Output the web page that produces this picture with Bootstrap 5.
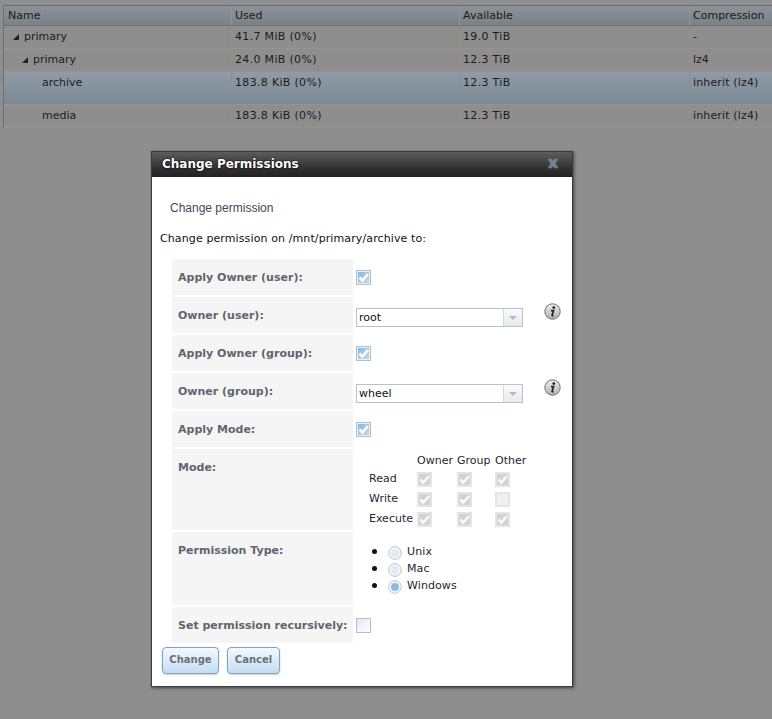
<!DOCTYPE html>
<html lang="en"><head><meta charset="utf-8"><title>Change Permissions</title>
<link href="https://cdn.jsdelivr.net/npm/bootstrap@5.3.0/dist/css/bootstrap.min.css" rel="stylesheet">
<style>
html,body{height:100%}
body{margin:0;background:#8e8e8e;font-family:"DejaVu Sans",Verdana,sans-serif;font-size:11px;line-height:14px;color:#000;overflow:hidden;position:relative}
.grid-wrap{padding:5px 0 0 3px;width:775px}
.grid-box{border:1px solid #6c6f71;border-right:0;border-bottom:0}
.grid-row{display:grid;grid-template-columns:228px 228px 230px 1fr;border-bottom:1px solid #9a9284;height:23px}
.grid-row>div{padding:4px 3px;border-right:1px solid #96907f;color:#1c1c1c;white-space:nowrap;overflow:hidden}
.grid-row>div:first-child{padding-left:4px}
.num{letter-spacing:.32px}
.comp{letter-spacing:.15px}
.grid-head{height:20px;background:linear-gradient(#8c9297,#7a8288);border-bottom:1px solid #6c7074}
.grid-head>div{padding:3px 3px;color:#1a1a1a;border-right-color:#8f979c}
.grid-sel{height:33px;background:linear-gradient(#8f9ca6,#7a8995)}
.grid-sel>div{border-right-color:#82909a}
.tri{display:inline-block;vertical-align:middle;margin-right:5px}
.grid-row>div.ind1{padding-left:9px}.grid-row>div.ind2{padding-left:18px}.grid-row>div.ind3{padding-left:38px}
.dlg{position:absolute;left:151px;top:151px;width:422px;height:536px;background:#fff;border:1px solid #3a3a3a;box-shadow:1px 1px 3px rgba(0,0,0,.55)}
.dlg-title{height:25px;background:linear-gradient(#5c5c5c,#2e2e2e 70%,#222);padding:4px 10px;color:#fff;font-weight:700;font-size:12px;line-height:16px;text-shadow:0 0 2px #000,0 0 1px #000;display:flex;justify-content:space-between}
.dlg-x{color:#6f8399;font-size:13px;font-weight:700;line-height:16px;margin-right:4px;text-shadow:0 0 2px #aaa}
.dlg-sub{font-family:"Liberation Sans",Arial,sans-serif;font-size:12px;color:#3d4b57;padding:23px 0 0 18px;line-height:16px}
.dlg-lead{padding:16px 0 0 8px;line-height:14px;color:#111;letter-spacing:.11px}
.form-grid{margin:13px 0 0 20px;display:flex;flex-direction:column;gap:2px}
.f-row{display:flex}
.f-lab{width:181px;background:#f5f5f5;padding:12px 0 0 6px;font-weight:700;color:#5e666c;font-size:11px;white-space:nowrap;flex:none}
.f-val{padding-left:3px;flex:1;position:relative}
.r36{height:36px}
.cb{width:15px;height:15px;border:1px solid #b4bfcd;background:linear-gradient(135deg,#86b6dd,#c6dcee);box-shadow:inset 0 0 0 1px #e8f0f6;display:block;position:relative}
.cb svg{position:absolute;left:0;top:0}
.cb.off{background:linear-gradient(135deg,#dfe9f2,#fff);box-shadow:none}
.cb.dis{border:2px solid #e4e4e4;background:#d3d3d3;box-shadow:none}
.cb.dis svg{left:-1px;top:-1px}
.cb.dis.off{background:#f0f0f0}
.cbv{padding-top:11px}
.sel{margin-top:11px;width:167px;height:19px;border:1px solid #b7c2cf;display:flex;background:#fff;align-items:stretch}
.sel-t{flex:1;padding:2px 0 0 2px;line-height:14px;color:#111}
.sel-a{width:19px;border-left:1px solid #d3d9e0;background:linear-gradient(#fafafa,#eaeaea);display:flex;align-items:center;justify-content:center}
.sel-a i{display:block;width:0;height:0;border-left:4px solid transparent;border-right:4px solid transparent;border-top:4px solid #a9bcd6}
.info{position:absolute;left:191px;top:6px}
.mode-t{display:grid;grid-template-columns:48px 40px 38px 30px;grid-template-rows:18px 20px 20px 20px;margin:5px 0 0 13px;color:#1d2730}
.mode-t>span{white-space:nowrap}
.rad-l{list-style:none;margin:11px 0 0;padding:0 0 0 16px}
.rad-l li{display:flex;align-items:center;height:17px;color:#1d2730;letter-spacing:.1px}
.bul{width:5px;height:5px;border-radius:50%;background:#111;margin-right:11px}
.rad{width:14px;height:14px;margin:3px 5px 0 0}
.dlg-btns{display:flex;gap:8px;padding:4px 0 0 10px}
.fn-btn{width:57px;height:27px;border:1px solid #7ea3c0;border-radius:4px;background:linear-gradient(#f3f8fc,#c4def4);color:#6b7276;font-weight:700;font-size:10px;padding:0 0 2px;line-height:20px;box-shadow:0 1px 2px rgba(0,0,0,.2)}
.fn-btn.b2{width:53px}
</style></head><body>
<svg class="position-absolute" width="0" height="0"><defs>
<linearGradient id="ig" x1="0" y1="0" x2="0" y2="1"><stop offset="0" stop-color="#ededed"/><stop offset="1" stop-color="#b2b2b2"/></linearGradient>
<symbol id="ck" viewBox="0 0 13 13"><path d="M2.5 6.5l2.8 3L11 3" fill="none" stroke="currentColor" stroke-width="2.6"/></symbol>
<symbol id="ic" viewBox="0 0 17 17"><circle cx="8.5" cy="8.5" r="7.7" fill="url(#ig)" stroke="#6d6d6d"/><circle cx="9.8" cy="4.6" r="1.4" fill="#222"/><path d="M7 7.6h2.6l-1.5 4.7q-.1.7 1.5.4" fill="none" stroke="#222" stroke-width="1.6"/></symbol>
</defs></svg>
<div class="grid-wrap"><div class="grid-box">
<div class="grid-row grid-head"><div>Name</div><div>Used</div><div>Available</div><div>Compression</div></div>
<div class="grid-row"><div class="ind1"><svg class="tri" width="6" height="6"><path d="M6 0V6H0Z" fill="#222"/></svg>primary</div><div class="num">41.7 MiB (0%)</div><div class="num">19.0 TiB</div><div>-</div></div>
<div class="grid-row"><div class="ind2"><svg class="tri" width="6" height="6"><path d="M6 0V6H0Z" fill="#222"/></svg>primary</div><div class="num">24.0 MiB (0%)</div><div class="num">12.3 TiB</div><div>lz4</div></div>
<div class="grid-row grid-sel"><div class="ind3">archive</div><div class="num">183.8 KiB (0%)</div><div class="num">12.3 TiB</div><div class="comp">inherit (lz4)</div></div>
<div class="grid-row"><div class="ind3">media</div><div class="num">183.8 KiB (0%)</div><div class="num">12.3 TiB</div><div class="comp">inherit (lz4)</div></div>
</div></div>

<div class="dlg">
<div class="dlg-title"><span>Change Permissions</span><span class="dlg-x">X</span></div>
<div class="dlg-sub">Change permission</div>
<div class="dlg-lead">Change permission on /mnt/primary/archive to:</div>
<div class="form-grid">
<div class="f-row r36"><div class="f-lab">Apply Owner (user):</div><div class="f-val cbv"><span class="cb text-white"><svg width="13" height="13"><use href="#ck"/></svg></span></div></div>
<div class="f-row r36"><div class="f-lab">Owner (user):</div><div class="f-val"><div class="sel"><div class="sel-t">root</div><div class="sel-a"><i></i></div></div>
<svg class="info" width="17" height="17"><use href="#ic"/></svg></div></div>
<div class="f-row r36"><div class="f-lab">Apply Owner (group):</div><div class="f-val cbv"><span class="cb text-white"><svg width="13" height="13"><use href="#ck"/></svg></span></div></div>
<div class="f-row r36"><div class="f-lab">Owner (group):</div><div class="f-val"><div class="sel"><div class="sel-t">wheel</div><div class="sel-a"><i></i></div></div>
<svg class="info" width="17" height="17"><use href="#ic"/></svg></div></div>
<div class="f-row r36"><div class="f-lab">Apply Mode:</div><div class="f-val cbv"><span class="cb text-white"><svg width="13" height="13"><use href="#ck"/></svg></span></div></div>
<div class="f-row" style="height:81px"><div class="f-lab">Mode:</div><div class="f-val"><div class="mode-t">
<span></span><span>Owner</span><span>Group</span><span>Other</span>
<span>Read</span><span class="cb dis text-light"><svg width="13" height="13"><use href="#ck"/></svg></span><span class="cb dis text-light"><svg width="13" height="13"><use href="#ck"/></svg></span><span class="cb dis text-light"><svg width="13" height="13"><use href="#ck"/></svg></span>
<span>Write</span><span class="cb dis text-light"><svg width="13" height="13"><use href="#ck"/></svg></span><span class="cb dis text-light"><svg width="13" height="13"><use href="#ck"/></svg></span><span class="cb dis off"></span>
<span>Execute</span><span class="cb dis text-light"><svg width="13" height="13"><use href="#ck"/></svg></span><span class="cb dis text-light"><svg width="13" height="13"><use href="#ck"/></svg></span><span class="cb dis text-light"><svg width="13" height="13"><use href="#ck"/></svg></span>
</div></div></div>
<div class="f-row" style="height:73px"><div class="f-lab">Permission Type:</div><div class="f-val"><ul class="rad-l">
<li><span class="bul"></span><svg class="rad" viewBox="0 0 14 14"><circle cx="7" cy="7" r="6.3" fill="#f4f7fa" stroke="#bcc4cc"/><circle cx="7" cy="7" r="4" fill="#e1ebf3"/></svg>Unix</li>
<li><span class="bul"></span><svg class="rad" viewBox="0 0 14 14"><circle cx="7" cy="7" r="6.3" fill="#f4f7fa" stroke="#bcc4cc"/><circle cx="7" cy="7" r="4" fill="#e1ebf3"/></svg>Mac</li>
<li><span class="bul"></span><svg class="rad" viewBox="0 0 14 14"><circle cx="7" cy="7" r="6.3" fill="#f4f7fa" stroke="#bcc4cc"/><circle cx="7" cy="7" r="4" fill="#8fbbdc"/></svg>Windows</li>
</ul></div></div>
<div class="f-row r36"><div class="f-lab">Set permission recursively:</div><div class="f-val cbv"><span class="cb off"></span></div></div>
</div>
<div class="dlg-btns"><button class="fn-btn" type="button">Change</button><button class="fn-btn b2" type="button">Cancel</button></div>
</div>
</body></html>
